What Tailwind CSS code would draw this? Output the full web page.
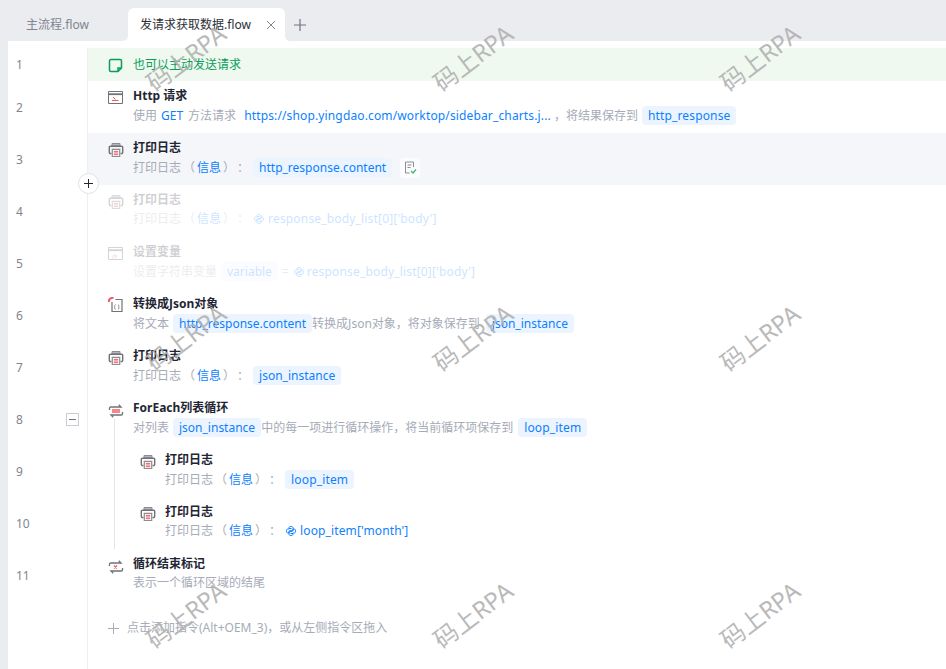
<!DOCTYPE html>
<html>
<head>
<meta charset="utf-8">
<title>发请求获取数据.flow</title>
<script src="https://cdn.jsdelivr.net/npm/@tailwindcss/browser@4"></script>
</head>
<body class="bg-[#ebecf0] font-['Noto_Sans','Noto_Sans_CJK_SC',sans-serif] text-xs overflow-hidden">
<svg class="hidden" width="0" height="0">
  <defs>
    <symbol id="printer" viewBox="0 0 16 16">
      <path d="M4 4V1.500h8V4z" fill="#b4b6ba" stroke="#8a8d93" stroke-width="1"/>
      <path d="M3.500 11.500H2.200a.9.9 0 0 1-.9-.9V5.200c0-.6.4-1 1-1h11.400c.6 0 1 .4 1 1v5.400a.9.9 0 0 1-.9.9h-1.300" fill="none" stroke="#6f7278" stroke-width="1.400"/>
      <path d="M4.300 7.400h7.400v7.100H4.300z" fill="#fff" stroke="#8a8d93" stroke-width="1.200"/>
      <path d="M5.800 9.400h4.400M5.800 11h4.400M5.800 12.700h4.400" stroke="#ee5a5f" stroke-width="1"/>
    </symbol>
    <symbol id="loop" viewBox="0 0 16 16">
      <path d="M1.500 7V5.200c0-.7.5-1.200 1.200-1.200H13l-2.200-2.200M14.500 9v1.800c0 .7-.5 1.200-1.200 1.200H3l2.200 2.200" fill="none" stroke="#6f7278" stroke-width="1.300"/>
      <rect x="4" y="6" width="8" height="4" fill="#f6868a"/>
    </symbol>
    <symbol id="py" viewBox="0 0 12 12">
      <path id="py-half" d="M6.500 3.500H4V2.700C4 2 4.700 1.500 6 1.500s2 .5 2 1.200v2.800c0 .5-.4.8-.8.8H4.800c-.5 0-.8.4-.8.8V8H2.700C2 8 1.500 7.200 1.500 6s.5-2 1.200-2H4" fill="none" stroke="currentColor" stroke-width="1"/>
      <path d="M6.500 3.500H4V2.700C4 2 4.700 1.500 6 1.500s2 .5 2 1.200v2.800c0 .5-.4.8-.8.8H4.800c-.5 0-.8.4-.8.8V8H2.700C2 8 1.500 7.200 1.500 6s.5-2 1.200-2H4" fill="none" stroke="currentColor" stroke-width="1" transform="rotate(180 6 6)"/>
    </symbol>
  </defs>
</svg>

<!-- tabs -->
<div class="flex h-[41px] items-end pl-[8px]">
  <div class="w-[120px] h-[33px] flex items-center pl-[18px] text-[#80858f]">主流程.flow</div>
  <div class="relative w-[157px] h-[33px] bg-white rounded-t-[6px] flex items-center pl-[12px] text-[#2b2f36]">
    发请求获取数据.flow
    <svg class="ml-auto mr-[9px]" width="10" height="10" viewBox="0 0 10 10"><path d="M1 1l8 8M9 1l-8 8" stroke="#80858f" stroke-width="1"/></svg>
    <span class="absolute -left-[5px] bottom-0 w-[5px] h-[5px] bg-white"><span class="block w-full h-full bg-[#ebecf0] rounded-br-[5px]"></span></span>
    <span class="absolute -right-[5px] bottom-0 w-[5px] h-[5px] bg-white"><span class="block w-full h-full bg-[#ebecf0] rounded-bl-[5px]"></span></span>
  </div>
  <div class="w-[30px] h-[33px] flex items-center justify-center">
    <svg width="12" height="12" viewBox="0 0 12 12"><path d="M6 0v12M0 6h12" stroke="#6f7480" stroke-width="1.200"/></svg>
  </div>
</div>

<!-- editor -->
<div class="relative ml-[8px] h-[628px] bg-white pt-[7px]">
  <div class="flex h-[33px]">
    <div class="w-[79px] pl-[8px] flex items-center pt-px text-[#80858f]">1</div>
    <div class="flex-1 border-l border-[#eeeff2] bg-[#eff9f0] pl-[20px] flex items-center gap-[10px] pt-px text-[#0a9d58]">
      <svg width="15" height="15" viewBox="0 0 15 15" class="shrink-0"><path d="M10 13.500H3a1.500 1.500 0 0 1-1.500-1.500V3A1.500 1.500 0 0 1 3 1.500h9A1.500 1.500 0 0 1 13.500 3v7L10 13.500zV10h3.500" fill="none" stroke="#0a9d58" stroke-width="1.500"/></svg>
      <span>也可以主动发送请求</span>
    </div>
  </div>

  <div class="flex h-[52px]">
    <div class="w-[79px] pl-[8px] flex items-center pt-px text-[#80858f]">2</div>
    <div class="flex-1 border-l border-[#eeeff2] pl-[20px] pt-[5px] flex gap-[10px]">
      <svg width="15" height="14" viewBox="0 0 15 14" class="shrink-0 mt-[5px]"><path d="M.5.500h14v12H.5z" fill="none" stroke="#6f7278" stroke-width="1"/><path d="M.5 3.200h14" stroke="#6f7278" stroke-width="1.800"/><path d="M5 6l2.500 2.500M4 9.500h6.500" fill="none" stroke="#ee5a5f" stroke-width="1"/></svg>
      <div>
        <div class="h-[20px] leading-[20px] font-bold text-[#1f2633]">Http 请求</div>
        <div class="h-[19px] flex items-center text-[#a6abb8]">使用<span class="text-[#0d7fff] ml-[4px] mr-[5px]">GET</span>方法请求<span class="text-[#0d7fff] ml-[8px] tracking-[0.14px]">https://shop.yingdao.com/worktop/sidebar_charts.j...</span><span class="ml-[3px]">，</span>将结果保存到<span class="ml-[4px] h-[19px] leading-[19px] px-[6px] rounded bg-[#ebf4ff] text-[#0d7fff] tracking-[0.15px]">http_response</span></div>
      </div>
    </div>
  </div>

  <div class="flex h-[52px]">
    <div class="w-[79px] pl-[8px] flex items-center pt-px text-[#80858f]">3</div>
    <div class="flex-1 border-l border-[#eeeff2] bg-[#f4f6fa] pl-[20px] pt-[5px] flex gap-[9px]">
      <svg width="16" height="16" class="shrink-0 mt-[4px]"><use href="#printer"/></svg>
      <div>
        <div class="h-[20px] leading-[20px] font-bold text-[#1f2633]">打印日志</div>
        <div class="h-[19px] flex items-center text-[#a6abb8]">打印日志<span class="mx-[2px]">（</span><span class="text-[#0d7fff]">信息</span><span class="mx-[2px]">）</span>：<span class="ml-[4px] h-[19px] leading-[19px] px-[6px] rounded bg-[#ebf4ff] text-[#0d7fff]">http_response.content</span>
          <span class="ml-[8px] w-[20px] h-[20px] rounded bg-white/70 flex items-center justify-center"><svg width="13" height="13" viewBox="0 0 13 13"><path d="M9.500 6V1h-8v11h4M3.500 4h4M3.500 6.500h3" fill="none" stroke="#8a8d93" stroke-width="1"/><path d="M7 10l2 2 3-3.500" fill="none" stroke="#3fb56c" stroke-width="1.200"/></svg></span>
        </div>
      </div>
    </div>
  </div>

  <div class="flex h-[52px]">
    <div class="w-[79px] pl-[8px] flex items-center pt-px text-[#80858f]">4</div>
    <div class="flex-1 border-l border-[#eeeff2] pl-[20px] pt-[5px] flex gap-[9px]">
      <svg width="16" height="16" class="shrink-0 mt-[4px] opacity-30"><use href="#printer"/></svg>
      <div class="opacity-30">
        <div class="h-[20px] leading-[20px] font-bold text-[#1f2633] opacity-70">打印日志</div>
        <div class="h-[18px] flex items-center text-[#a6abb8] opacity-70">打印日志<span class="mx-[2px]">（</span><span class="text-[#0d7fff]">信息</span><span class="mx-[2px]">）</span>：<svg width="12" height="12" class="ml-[4px] mr-[3px] text-[#0d7fff]"><use href="#py"/></svg><span class="text-[#0d7fff] tracking-[0.17px]">response_body_list[0]['body']</span></div>
      </div>
    </div>
  </div>

  <div class="flex h-[52px]">
    <div class="w-[79px] pl-[8px] flex items-center pt-px text-[#80858f]">5</div>
    <div class="flex-1 border-l border-[#eeeff2] pl-[20px] pt-[5px] flex gap-[10px]">
      <svg width="15" height="14" viewBox="0 0 15 14" class="shrink-0 mt-[5px] opacity-30"><path d="M.5.500h14v12H.5z" fill="none" stroke="#6f7278" stroke-width="1"/><path d="M.5 3.200h14" stroke="#6f7278" stroke-width="1.800"/><text x="4.500" y="10.500" font-size="6" font-style="italic" fill="#ee5a5f">fx</text></svg>
      <div class="opacity-30">
        <div class="h-[20px] leading-[20px] font-bold text-[#1f2633] opacity-70">设置变量</div>
        <div class="h-[19px] flex items-center text-[#a6abb8] opacity-70">设置字符串变量<span class="ml-[4px] h-[19px] leading-[19px] px-[6px] rounded bg-[#ebf4ff] text-[#0d7fff]">variable</span><span class="mx-[4px]">=</span><svg width="12" height="12" class="mr-[2px] text-[#0d7fff]"><use href="#py"/></svg><span class="text-[#0d7fff] tracking-[0.17px]">response_body_list[0]['body']</span></div>
      </div>
    </div>
  </div>

  <div class="flex h-[52px]">
    <div class="w-[79px] pl-[8px] flex items-center pt-px text-[#80858f]">6</div>
    <div class="flex-1 border-l border-[#eeeff2] pl-[20px] pt-[5px] flex gap-[9px]">
      <svg width="16" height="16" viewBox="0 0 16 16" class="shrink-0 mt-[3px]"><path d="M4 5v9.500h10V2.500H7.500" fill="none" stroke="#6f7278" stroke-width="1.200"/><path d="M1 5a3.500 3.500 0 0 1 4.500-4" fill="none" stroke="#ee5a5f" stroke-width="2"/><path d="M7.500 7.500c-1 0-.6 2.500-1.200 2.500.6 0 .2 2.500 1.200 2.500M10 7.500c1 0 .6 2.500 1.200 2.500-.6 0-.2 2.500-1.200 2.500" fill="none" stroke="#6f7278" stroke-width=".8"/></svg>
      <div>
        <div class="h-[20px] leading-[20px] font-bold text-[#1f2633]">转换成Json对象</div>
        <div class="h-[19px] flex items-center text-[#a6abb8]">将文本<span class="ml-[4px] h-[19px] leading-[19px] px-[6px] rounded bg-[#ebf4ff] text-[#0d7fff]">http_response.content</span>转换成Json对象，将对象保存到<span class="ml-[6px] h-[19px] leading-[19px] px-[6px] rounded bg-[#ebf4ff] text-[#0d7fff]">json_instance</span></div>
      </div>
    </div>
  </div>

  <div class="flex h-[52px]">
    <div class="w-[79px] pl-[8px] flex items-center pt-px text-[#80858f]">7</div>
    <div class="flex-1 border-l border-[#eeeff2] pl-[20px] pt-[5px] flex gap-[9px]">
      <svg width="16" height="16" class="shrink-0 mt-[4px]"><use href="#printer"/></svg>
      <div>
        <div class="h-[20px] leading-[20px] font-bold text-[#1f2633]">打印日志</div>
        <div class="h-[19px] flex items-center text-[#a6abb8]">打印日志<span class="mx-[2px]">（</span><span class="text-[#0d7fff]">信息</span><span class="mx-[2px]">）</span>：<span class="ml-[4px] h-[19px] leading-[19px] px-[6px] rounded bg-[#ebf4ff] text-[#0d7fff]">json_instance</span></div>
      </div>
    </div>
  </div>

  <div class="flex h-[52px]">
    <div class="w-[79px] pl-[8px] pr-[8px] flex items-center justify-between pt-px text-[#80858f]">8
      <span class="w-[13px] h-[13px] border border-[#c9ccd3] flex items-center justify-center"><span class="w-[7px] h-px bg-[#6f7278]"></span></span>
    </div>
    <div class="relative flex-1 border-l border-[#eeeff2] pl-[20px] pt-[5px] flex gap-[9px]">
      <div class="absolute left-[26px] bottom-0 w-px h-[26px] bg-[#e3e5ea]"></div>
      <svg width="16" height="16" class="shrink-0 mt-[5px]"><use href="#loop"/></svg>
      <div>
        <div class="h-[20px] leading-[20px] font-bold text-[#1f2633]">ForEach列表循环</div>
        <div class="h-[19px] flex items-center text-[#a6abb8]">对列表<span class="ml-[4px] h-[19px] leading-[19px] px-[6px] rounded bg-[#ebf4ff] text-[#0d7fff]">json_instance</span>中的每一项进行循环操作，将当前循环项保存到<span class="ml-[5px] h-[19px] leading-[19px] px-[6px] rounded bg-[#ebf4ff] text-[#0d7fff] tracking-[0.15px]">loop_item</span></div>
      </div>
    </div>
  </div>

  <div class="flex h-[52px]">
    <div class="w-[79px] pl-[8px] flex items-center pt-px text-[#80858f]">9</div>
    <div class="flex-1 border-l border-[#eeeff2] pl-[26px] flex">
      <div class="w-px bg-[#e3e5ea]"></div>
      <div class="pl-[25px] pt-[5px] flex gap-[9px]">
        <svg width="16" height="16" class="shrink-0 mt-[4px]"><use href="#printer"/></svg>
        <div>
          <div class="h-[20px] leading-[20px] font-bold text-[#1f2633]">打印日志</div>
          <div class="h-[19px] flex items-center text-[#a6abb8]">打印日志<span class="mx-[2px]">（</span><span class="text-[#0d7fff]">信息</span><span class="mx-[2px]">）</span>：<span class="ml-[4px] h-[19px] leading-[19px] px-[6px] rounded bg-[#ebf4ff] text-[#0d7fff] tracking-[0.15px]">loop_item</span></div>
        </div>
      </div>
    </div>
  </div>

  <div class="flex h-[52px]">
    <div class="w-[79px] pl-[8px] flex items-center pt-px text-[#80858f]">10</div>
    <div class="flex-1 border-l border-[#eeeff2] pl-[26px] flex">
      <div class="w-px bg-[#e3e5ea]"></div>
      <div class="pl-[25px] pt-[5px] flex gap-[9px]">
        <svg width="16" height="16" class="shrink-0 mt-[4px]"><use href="#printer"/></svg>
        <div>
          <div class="h-[20px] leading-[20px] font-bold text-[#1f2633]">打印日志</div>
          <div class="h-[18px] flex items-center text-[#a6abb8]">打印日志<span class="mx-[2px]">（</span><span class="text-[#0d7fff]">信息</span><span class="mx-[2px]">）</span>：<svg width="12" height="12" class="ml-[4px] mr-[3px] text-[#0d7fff]"><use href="#py"/></svg><span class="text-[#0d7fff] tracking-[0.12px]">loop_item['month']</span></div>
        </div>
      </div>
    </div>
  </div>

  <div class="flex h-[52px]">
    <div class="w-[79px] pl-[8px] flex items-center pt-px text-[#80858f]">11</div>
    <div class="flex-1 border-l border-[#eeeff2] pl-[20px] pt-[5px] flex gap-[9px]">
      <svg width="16" height="16" viewBox="0 0 16 16" class="shrink-0 mt-[5px]"><path d="M1.500 7V5.200c0-.7.5-1.200 1.200-1.200H13l-2.200-2.200M14.500 9v1.800c0 .7-.5 1.200-1.200 1.200H3l2.200 2.200" fill="none" stroke="#6f7278" stroke-width="1.300"/><path d="M6 6.500l3 3M9 6.500l-3 3" stroke="#ee5a5f" stroke-width="1.100"/></svg>
      <div>
        <div class="h-[20px] leading-[20px] font-bold text-[#1f2633]">循环结束标记</div>
        <div class="h-[18px] flex items-center text-[#a6abb8]">表示一个循环区域的结尾</div>
      </div>
    </div>
  </div>

  <div class="flex h-[68px]">
    <div class="w-[79px]"></div>
    <div class="flex-1 border-l border-[#eeeff2] pl-[20px] pt-[17px]">
      <div class="flex items-center gap-[8px] h-[20px] text-[#a6abb8]">
        <svg width="11" height="11" viewBox="0 0 11 11"><path d="M5.500 0v11M0 5.500h11" stroke="#a6abb8" stroke-width="1"/></svg>
        点击添加指令(Alt+OEM_3)，或从左侧指令区拖入
      </div>
    </div>
  </div>

  <!-- insert button between rows -->
  <div class="absolute left-[70px] top-[132px] w-[21px] h-[21px] rounded-full bg-white border border-[#dfe1e6] flex items-center justify-center">
    <svg width="9" height="9" viewBox="0 0 9 9"><path d="M4.500 0v9M0 4.500h9" stroke="#1f2633" stroke-width="1"/></svg>
  </div>

  <!-- watermark -->
  <div class="absolute left-[128px] top-[2px] w-[100px] text-center -rotate-[37deg] text-[24px] leading-[30px] text-[#b2b2b2] opacity-90 pointer-events-none whitespace-nowrap">码上RPA</div>
  <div class="absolute left-[415px] top-[2px] w-[100px] text-center -rotate-[37deg] text-[24px] leading-[30px] text-[#b2b2b2] opacity-90 pointer-events-none whitespace-nowrap">码上RPA</div>
  <div class="absolute left-[702px] top-[2px] w-[100px] text-center -rotate-[37deg] text-[24px] leading-[30px] text-[#b2b2b2] opacity-90 pointer-events-none whitespace-nowrap">码上RPA</div>
  <div class="absolute left-[128px] top-[282px] w-[100px] text-center -rotate-[37deg] text-[24px] leading-[30px] text-[#b2b2b2] opacity-90 pointer-events-none whitespace-nowrap">码上RPA</div>
  <div class="absolute left-[415px] top-[282px] w-[100px] text-center -rotate-[37deg] text-[24px] leading-[30px] text-[#b2b2b2] opacity-90 pointer-events-none whitespace-nowrap">码上RPA</div>
  <div class="absolute left-[702px] top-[282px] w-[100px] text-center -rotate-[37deg] text-[24px] leading-[30px] text-[#b2b2b2] opacity-90 pointer-events-none whitespace-nowrap">码上RPA</div>
  <div class="absolute left-[128px] top-[559px] w-[100px] text-center -rotate-[37deg] text-[24px] leading-[30px] text-[#b2b2b2] opacity-90 pointer-events-none whitespace-nowrap">码上RPA</div>
  <div class="absolute left-[415px] top-[559px] w-[100px] text-center -rotate-[37deg] text-[24px] leading-[30px] text-[#b2b2b2] opacity-90 pointer-events-none whitespace-nowrap">码上RPA</div>
  <div class="absolute left-[702px] top-[559px] w-[100px] text-center -rotate-[37deg] text-[24px] leading-[30px] text-[#b2b2b2] opacity-90 pointer-events-none whitespace-nowrap">码上RPA</div>
</div>
</body>
</html>
